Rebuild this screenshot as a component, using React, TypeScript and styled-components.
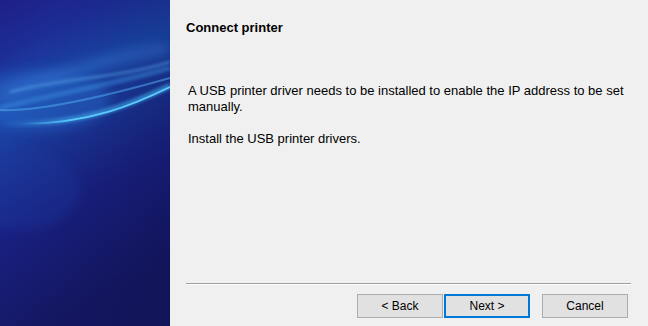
import React from "react";
import styled, { createGlobalStyle } from "styled-components";

const Global = createGlobalStyle`
  html, body { margin: 0; padding: 0; background: #f0f0f0; }
  body { font-family: "Liberation Sans", Arial, sans-serif; color: #000; }
`;

const Window = styled.div`
  display: flex;
  width: 648px;
  height: 326px;
  background: #f0f0f0;
  overflow: hidden;
`;

const SideArt = styled.div`
  flex: 0 0 170px;
  width: 170px;
  height: 326px;
  svg { display: block; }
`;

const Main = styled.div`
  flex: 1;
  display: flex;
  flex-direction: column;
  padding-bottom: 8px;
`;

const Title = styled.h1`
  margin: 20px 0 0 16px;
  font-size: 13px;
  line-height: 16px;
  font-weight: bold;
`;

const Message = styled.div`
  margin: 47px 17px 0 18px;
  display: flex;
  flex-direction: column;
  gap: 16px;
`;

const Para = styled.p`
  margin: 0;
  font-size: 13px;
  line-height: 16px;
`;

const Spacer = styled.div`
  flex: 1;
`;

const Separator = styled.div`
  margin: 0 17px 0 16px;
  height: 1px;
  background: #a0a0a0;
  border-bottom: 1px solid #ffffff;
`;

const ButtonRow = styled.div`
  display: flex;
  justify-content: flex-end;
  margin: 9px 20px 0 0;
`;

const Button = styled.button<{ $primary?: boolean; $gap?: number }>`
  box-sizing: border-box;
  width: 86px;
  height: 24px;
  margin-left: ${(p) => p.$gap ?? 0}px;
  padding: 0;
  background: #e1e1e1;
  border: ${(p) => (p.$primary ? "2px solid #0078d7" : "1px solid #adadad")};
  font-family: "Liberation Sans", Arial, sans-serif;
  font-size: 12px;
  color: #000;
  cursor: default;
`;

function Art() {
  return (
    <svg width="170" height="326" viewBox="0 0 170 326">
      <defs>
        <linearGradient id="bg" x1="0" y1="0" x2="0.25" y2="1">
          <stop offset="0" stopColor="#1d1f86" />
          <stop offset="0.16" stopColor="#1d2d96" />
          <stop offset="0.32" stopColor="#1a4aac" />
          <stop offset="0.5" stopColor="#1b3597" />
          <stop offset="0.68" stopColor="#1a2287" />
          <stop offset="1" stopColor="#171a6a" />
        </linearGradient>
        <linearGradient id="shade" x1="0.1" y1="0.35" x2="0.9" y2="0.95">
          <stop offset="0" stopColor="#0a0c40" stopOpacity="0" />
          <stop offset="0.5" stopColor="#0a0c40" stopOpacity="0.2" />
          <stop offset="1" stopColor="#0a0c40" stopOpacity="0.4" />
        </linearGradient>
        <linearGradient id="fadeL" gradientUnits="userSpaceOnUse" x1="20" y1="0" x2="170" y2="0">
          <stop offset="0" stopColor="#5fd0ff" stopOpacity="0" />
          <stop offset="0.35" stopColor="#5fd0ff" stopOpacity="0.9" />
          <stop offset="1" stopColor="#5fd0ff" stopOpacity="1" />
        </linearGradient>
        <linearGradient id="fadeL2" gradientUnits="userSpaceOnUse" x1="0" y1="0" x2="170" y2="0">
          <stop offset="0" stopColor="#3fb0f0" stopOpacity="0" />
          <stop offset="0.4" stopColor="#3fb0f0" stopOpacity="0.5" />
          <stop offset="1" stopColor="#3fb0f0" stopOpacity="0.6" />
        </linearGradient>
        <filter id="b6" x="-50%" y="-50%" width="200%" height="200%">
          <feGaussianBlur stdDeviation="6" />
        </filter>
        <filter id="b2" x="-50%" y="-50%" width="200%" height="200%">
          <feGaussianBlur stdDeviation="1.6" />
        </filter>
        <filter id="b1" x="-50%" y="-50%" width="200%" height="200%">
          <feGaussianBlur stdDeviation="0.6" />
        </filter>
      </defs>
      <rect width="170" height="326" fill="url(#bg)" />
      <rect width="170" height="326" fill="url(#shade)" />
      <ellipse cx="40" cy="100" rx="70" ry="30" fill="#2a70d0" opacity="0.4" filter="url(#b6)" />
      <path d="M0 95 C 40 80, 100 60, 170 48" stroke="#3d7ed8" strokeWidth="10" fill="none" opacity="0.45" filter="url(#b6)" />
      <path d="M10 92 C 60 78, 120 78, 170 62" stroke="#5aa6ea" strokeWidth="3" fill="none" opacity="0.5" filter="url(#b2)" />
      <path d="M0 108 C 50 95, 110 85, 170 68" stroke="#3e8fe0" strokeWidth="5" fill="none" opacity="0.45" filter="url(#b2)" />
      <path d="M0 110 C 40 112, 110 95, 170 78" stroke="#4ea8ec" strokeWidth="2" fill="none" opacity="0.55" filter="url(#b1)" />
      <path d="M0 124 C 80 126, 130 105, 170 86" stroke="url(#fadeL2)" strokeWidth="6" fill="none" filter="url(#b2)" />
      <path d="M20 124 C 90 124, 135 104, 170 87" stroke="url(#fadeL)" strokeWidth="1.6" fill="none" filter="url(#b1)" />
      <ellipse cx="20" cy="190" rx="60" ry="40" fill="#1b3a9e" opacity="0.3" filter="url(#b6)" />
    </svg>
  );
}

export default function App() {
  return (
    <>
      <Global />
      <Window>
        <SideArt>
          <Art />
        </SideArt>
        <Main>
          <Title>Connect printer</Title>
          <Message>
            <Para>
              A USB printer driver needs to be installed to enable the IP address to be set manually.
            </Para>
            <Para>Install the USB printer drivers.</Para>
          </Message>
          <Spacer />
          <Separator />
          <ButtonRow>
            <Button>&lt; Back</Button>
            <Button $primary $gap={1}>Next &gt;</Button>
            <Button $gap={12}>Cancel</Button>
          </ButtonRow>
        </Main>
      </Window>
    </>
  );
}
